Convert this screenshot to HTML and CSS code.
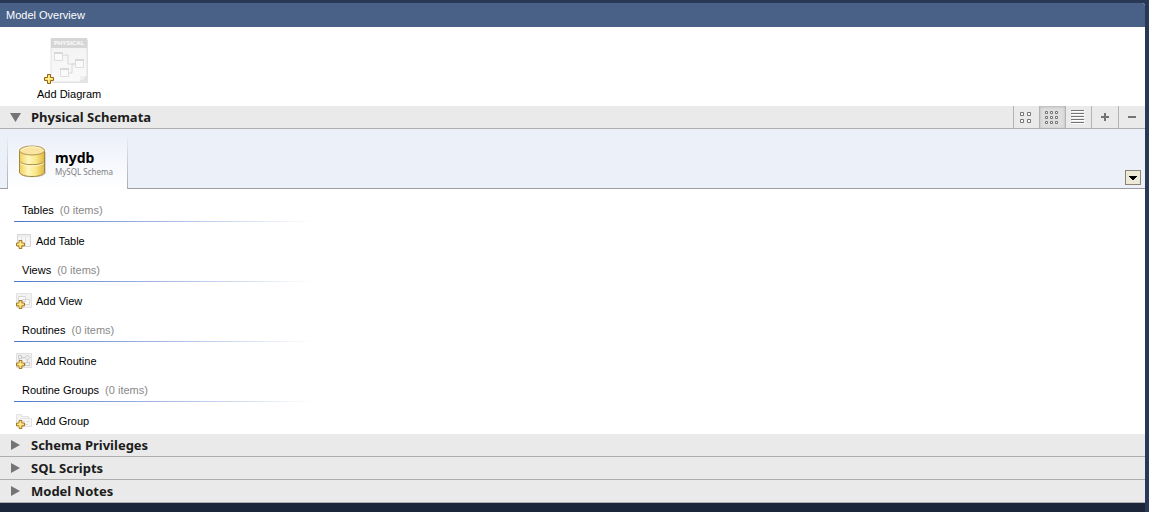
FILE: index.html
```html
<!DOCTYPE html>
<html lang="en">
<head>
<meta charset="utf-8">
<title>Model Overview</title>
<link rel="stylesheet" href="styles.css">
</head>
<body>
<svg class="defs" aria-hidden="true">
  <defs>
    <linearGradient id="gold" x1="0" y1="0" x2="1" y2="0">
      <stop offset="0" stop-color="#efd058"/><stop offset=".35" stop-color="#fff6bc"/><stop offset=".65" stop-color="#fae88c"/><stop offset="1" stop-color="#dfb83f"/>
    </linearGradient>
    <linearGradient id="paper" x1="0" y1="0" x2="0" y2="1">
      <stop offset="0" stop-color="#f2f2f2"/><stop offset="1" stop-color="#fafafa"/>
    </linearGradient>
    <symbol id="plus" viewBox="0 0 10 10">
      <path d="M3.500 .5h3v3h3v3h-3v3h-3v-3h-3v-3h3z" fill="#ffe066" stroke="#94640f"/>
      <path d="M4.500 2v6M2 4.500h6" stroke="#fff0a0"/>
    </symbol>
  </defs>
</svg>
<main class="panel">
  <h1 class="title">Model Overview</h1>
  <section class="diagrams">
    <button class="diagram">
      <svg width="46" height="48" viewBox="0 0 46 48">
        <path d="M8 3h36v43H8z" fill="#e3e3e3"/>
        <path d="M7 2h36v37l-7 6H7z" fill="url(#paper)" stroke="#e2e2e2"/>
        <path d="M7 1h36v10H7z" fill="#d6d6d6"/>
        <text x="10" y="8" class="sheet-label">PHYSICAL</text>
        <path d="M19 18h5v9h7M31 27h-3v9h-5" fill="none" stroke="#d8d8d8"/>
        <path d="M10.500 15.500h8v8h-8zM31.500 22.500h8v8h-8zM16.500 31.500h8v8h-8z" fill="#fafafa" stroke="#dedede"/>
        <path d="M10 15h9v2h-9zM31 22h9v2h-9zM16 31h9v2h-9z" fill="#d8d8d8"/>
        <path d="M36 45q2-2 1-5 3 1 6-1z" fill="#fff" stroke="#e4e4e4"/>
        <use href="#plus" x="0" y="37" width="10" height="10"/>
      </svg>
      <span>Add Diagram</span>
    </button>
  </section>

  <section>
    <header class="bar">
      <button class="toggle"><svg width="11" height="9" viewBox="0 0 11 9"><path d="M0 0h11L5.500 9z" fill="#747474"/></svg>Physical Schemata</button>
      <div class="tools">
        <button class="tool" aria-label="Large icons"><svg width="15" height="14" viewBox="0 0 15 14"><path d="M1.500 2.500h3v3h-3zM8.500 2.500h3v3h-3zM1.500 9.500h3v3h-3zM8.500 9.500h3v3h-3z" fill="#fff" stroke="#747474"/></svg></button>
        <button class="tool pressed" aria-label="Small icons" aria-pressed="true"><svg width="15" height="14" viewBox="0 0 15 14"><path d="M.5 1.500h2v2h-2zM5.500 1.500h2v2h-2zM10.500 1.500h2v2h-2zM.5 6.500h2v2h-2zM5.500 6.500h2v2h-2zM10.500 6.500h2v2h-2zM.5 11.500h2v2h-2zM5.500 11.500h2v2h-2zM10.500 11.500h2v2h-2z" fill="#fff" stroke="#747474"/></svg></button>
        <button class="tool" aria-label="List"><svg width="15" height="14" viewBox="0 0 15 14"><path d="M1 1.500h13M1 4.500h13M1 7.500h13M1 10.500h13M1 13.500h13" stroke="#fff"/><path d="M0 .5h13M0 3.500h13M0 6.500h13M0 9.500h13M0 12.500h13" stroke="#747474"/></svg></button>
        <button class="tool wide" aria-label="Add schema"><svg width="8" height="8" viewBox="0 0 8 8"><path d="M4 0v8M0 4h8" stroke="#747474" stroke-width="2"/></svg></button>
        <button class="tool wide" aria-label="Remove schema"><svg width="8" height="8" viewBox="0 0 8 8"><path d="M0 4h8" stroke="#747474" stroke-width="2"/></svg></button>
      </div>
    </header>
    <div class="tabs">
      <button class="tab">
        <svg width="28" height="34" viewBox="0 0 28 34">
          <path d="M3 7v22c0 5 25 4 25-1V7z" fill="#d3d6dc"/>
          <path d="M1.500 5v22c0 6 25 6 25 0V5z" fill="url(#gold)" stroke="#a5853a"/>
          <path d="M1.500 16c1 5 24 5 25 0" fill="none" stroke="#a5853a"/>
          <path d="M2 17.500c2 4.500 22 4.500 24 0" fill="none" stroke="#fff8cf"/>
          <ellipse cx="14" cy="5.500" rx="12.500" ry="4.500" fill="#fae5a0" stroke="#b59750"/>
          <path d="M4 5c4-4 15-4 19-1" fill="none" stroke="#fff8d8"/>
        </svg>
        <span class="names"><b class="name">mydb</b><small class="kind">MySQL Schema</small></span>
      </button>
      <button class="more" aria-label="More schemas"><svg width="8" height="4" viewBox="0 0 8 4"><path d="M0 0h8v1H7v1H6v1H5v1H3V3H2V2H1V1H0z" fill="#000"/></svg></button>
    </div>
    <div class="groups">
      <section class="group">
        <h2 class="heading">Tables <span class="count">(0 items)</span></h2>
        <button class="add"><svg width="16" height="16" viewBox="0 0 16 16"><path d="M1.500 1.500h13v12h-13z" fill="#f5f5f5" stroke="#d6d6d6"/><path d="M2 3h12M5.500 4v9M9.500 4v9" stroke="#e4e4e4"/><use href="#plus" x="0" y="7" width="9" height="9"/></svg>Add Table</button>
      </section>
      <section class="group">
        <h2 class="heading">Views <span class="count">(0 items)</span></h2>
        <button class="add"><svg width="16" height="16" viewBox="0 0 16 16"><path d="M.5 .5h15v14H.5z" fill="#f3f3f3" stroke="#e2e2e2"/><path d="M2.500 3.500h7v5h-7zM6.500 6.500h7v5h-7z" fill="#fafafa" stroke="#d6d6d6"/><use href="#plus" x="0" y="7" width="9" height="9"/></svg>Add View</button>
      </section>
      <section class="group">
        <h2 class="heading">Routines <span class="count">(0 items)</span></h2>
        <button class="add"><svg width="16" height="16" viewBox="0 0 16 16"><path d="M.5 .5h15v14H.5z" fill="#f0f0f0" stroke="#e0e0e0"/><path d="M2.500 2.500h3v3h-3zM9.500 9.500h4v3h-4zM11.500 2l2.500 2.500L11.500 7 9 4.500zM6 4.500h3M11.500 7v2M3.500 6v4" fill="none" stroke="#cacaca"/><use href="#plus" x="0" y="7" width="9" height="9"/></svg>Add Routine</button>
      </section>
      <section class="group">
        <h2 class="heading">Routine Groups <span class="count">(0 items)</span></h2>
        <button class="add"><svg width="16" height="16" viewBox="0 0 16 16"><path d="M.5 1.500h5v2h7v9H.5z" fill="#f3f3f3" stroke="#e2e2e2"/><path d="M4.500 5.500h11v8h-11z" fill="#f6f6f6" stroke="#e2e2e2"/><path d="M7 8.500h2M11 8.500h2M8 11.500h4" stroke="#d6d6d6"/><use href="#plus" x="0" y="7" width="9" height="9"/></svg>Add Group</button>
      </section>
    </div>
  </section>

  <header class="bar"><button class="toggle"><svg width="11" height="10" viewBox="0 0 11 10"><path d="M1 0v10l9-5z" fill="#747474"/></svg>Schema Privileges</button></header>
  <header class="bar"><button class="toggle"><svg width="11" height="10" viewBox="0 0 11 10"><path d="M1 0v10l9-5z" fill="#747474"/></svg>SQL Scripts</button></header>
  <header class="bar"><button class="toggle"><svg width="11" height="10" viewBox="0 0 11 10"><path d="M1 0v10l9-5z" fill="#747474"/></svg>Model Notes</button></header>
</main>
</body>
</html>
```
FILE: styles.css
```css
* { box-sizing: border-box; }
body {
  margin: 0;
  padding: 3px 4px 9px 0;
  background: linear-gradient(#293955, #293955) right / 4px 100% no-repeat, linear-gradient(#293955 50%, #1b263a 50%);
  font: 11px/14px "Liberation Sans", Arial, sans-serif;
  color: #000;
}
button {
  margin: 0;
  padding: 0;
  border: 0;
  background: none;
  color: inherit;
  font: inherit;
  text-align: left;
}
svg { display: block; flex: none; }
.defs { position: absolute; width: 0; height: 0; }
.panel { background: #fff; border-radius: 0 3px 0 0; overflow: hidden; }
.title {
  margin: 0;
  padding: 5px 6px;
  background: #4a6187;
  color: #fff;
  font-size: 11px;
  font-weight: 400;
  line-height: 14px;
}
.diagrams { padding: 10px 37px 5px; }
.diagram { display: flex; flex-direction: column; gap: 2px; }
.diagram svg { margin-left: 7px; }
.sheet-label { fill: #fff; font: bold 6px "Liberation Sans", Arial, sans-serif; }
.bar {
  display: flex;
  justify-content: space-between;
  height: 23px;
  border-bottom: 1px solid #aeaeae;
  background: #eaeaea;
}
.toggle {
  display: flex;
  align-items: center;
  gap: 10px;
  padding-left: 10px;
  color: #1c1c1c;
  font: bold 13px/22px "Noto Sans", sans-serif;
}
.tools { display: flex; }
.tool {
  display: grid;
  place-items: center;
  width: 26px;
  border-left: 1px solid #b4b4b4;
}
.wide { width: 27px; }
.pressed { background: #dedede; box-shadow: inset 0 1px 3px #b8b8b8; }
.tabs {
  display: flex;
  justify-content: space-between;
  align-items: flex-end;
  height: 60px;
  padding: 0 4px 0 7px;
  background: #ecf0f9;
  border-bottom: 1px solid #9d9da1;
}
.tab {
  display: flex;
  align-items: center;
  gap: 9px;
  width: 121px;
  height: 54px;
  margin-bottom: -1px;
  padding: 0 10px;
  border: solid;
  border-width: 0 1px;
  border-image: linear-gradient(#ecf0f9, #a6a9b0) 1;
  background: linear-gradient(#ecf0f9, #fff);
}
.names { display: flex; flex-direction: column; padding-top: 4px; }
.name { font: bold 14px/16px "Noto Sans", sans-serif; }
.kind { color: #808080; font: 8px/12px "Noto Sans", sans-serif; white-space: nowrap; }
.more {
  display: grid;
  place-items: center;
  width: 16px;
  height: 15px;
  margin: 0 0 3px;
  border: 1px solid #8c8375;
  background: #ece9d8;
}
.groups { padding: 14px 14px 5px; }
.group { height: 60px; }
.group:last-child { height: 46px; }
.heading {
  width: 300px;
  margin: 0 0 11px;
  padding: 0 8px 5px;
  background: linear-gradient(to right, #4e76c8, #fff) bottom / 100% 1px no-repeat;
  font-size: 11px;
  font-weight: 400;
  line-height: 14px;
}
.count { margin-left: 3px; color: #888; }
.add { display: flex; align-items: center; gap: 4px; padding-left: 2px; }
```
